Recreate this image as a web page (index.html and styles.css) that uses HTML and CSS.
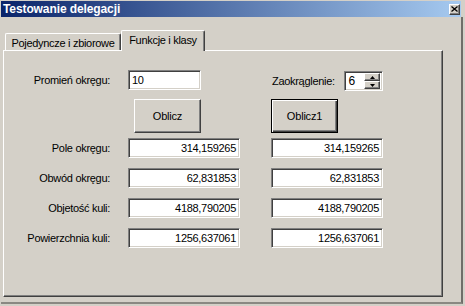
FILE: index.html
```html
<!DOCTYPE html>
<html lang="pl">
<head>
    <meta charset="UTF-8">
    <title>Testowanie delegacji</title>
    <link rel="stylesheet" href="styles.css">
</head>
<body>
    <div class="window">
        <div class="titlebar">
            <span class="title">Testowanie delegacji</span>
            <span class="close">
                <svg width="7" height="6" viewBox="0 0 7 6"><path d="M0.5 0.5 L6.5 5.5 M6.5 0.5 L0.5 5.5" stroke="#000" stroke-width="1.3"/></svg>
            </span>
        </div>
        <div class="client">
            <div class="tabs">
                <div class="tab">Pojedyncze i zbiorowe</div>
                <div class="tab active">Funkcje i klasy</div>
            </div>
            <div class="panel">
                <div class="row row-top">
                    <div class="lbl">Promień okręgu:</div>
                    <div class="cell"><div class="field field-short">10</div></div>
                    <div class="cell round">
                        <span class="round-lbl">Zaokrąglenie:</span>
                        <div class="spin">
                            <span class="spin-val">6</span>
                            <div class="spin-btns">
                                <div class="spin-btn"><svg width="5" height="3" viewBox="0 0 5 3"><path d="M2.5 0 L5 3 L0 3 Z" fill="#000"/></svg></div>
                                <div class="spin-btn"><svg width="5" height="3" viewBox="0 0 5 3"><path d="M0 0 L5 0 L2.5 3 Z" fill="#000"/></svg></div>
                            </div>
                        </div>
                    </div>
                </div>
                <div class="row row-btns">
                    <div class="lbl"></div>
                    <div class="cell"><button class="btn btn-left">Oblicz</button></div>
                    <div class="cell"><button class="btn btn-default">Oblicz1</button></div>
                </div>
                <div class="row row-out first">
                    <div class="lbl">Pole okręgu:</div>
                    <div class="cell"><div class="field field-out">314,159265</div></div>
                    <div class="cell"><div class="field field-out">314,159265</div></div>
                </div>
                <div class="row row-out">
                    <div class="lbl">Obwód okręgu:</div>
                    <div class="cell"><div class="field field-out">62,831853</div></div>
                    <div class="cell"><div class="field field-out">62,831853</div></div>
                </div>
                <div class="row row-out">
                    <div class="lbl">Objetość kuli:</div>
                    <div class="cell"><div class="field field-out">4188,790205</div></div>
                    <div class="cell"><div class="field field-out">4188,790205</div></div>
                </div>
                <div class="row row-out">
                    <div class="lbl">Powierzchnia kuli:</div>
                    <div class="cell"><div class="field field-out">1256,637061</div></div>
                    <div class="cell"><div class="field field-out">1256,637061</div></div>
                </div>
            </div>
        </div>
    </div>
</body>
</html>
```

FILE: styles.css
```css
body {
    margin: 0;
    padding: 0;
    background-color: #d4d0c8;
    font-family: "Liberation Sans", Arial, sans-serif;
    font-size: 11px;
    letter-spacing: -0.3px;
    color: #000;
}

.window {
    width: 465px;
    height: 306px;
    box-sizing: border-box;
    padding: 1px 2px 2px 1px;
    display: flex;
    flex-direction: column;
}

.titlebar {
    height: 16px;
    margin-right: 2px;
    flex-shrink: 0;
    display: flex;
    align-items: center;
    justify-content: space-between;
    padding: 0 1px 0 2px;
    background: linear-gradient(to right, #0a246a, #a6caf0);
}

.titlebar .title {
    color: white;
    font-weight: bold;
    font-size: 12px;
    letter-spacing: -0.1px;
}

.titlebar .close {
    width: 11px;
    height: 11px;
    box-sizing: border-box;
    display: flex;
    align-items: center;
    justify-content: center;
    background-color: #d4d0c8;
    border: 1px solid;
    border-color: #fff #404040 #404040 #fff;
    box-shadow: inset -1px -1px #808080;
}

.client {
    flex: 1;
    padding: 13px 0 0 2px;
    border-right: 2px solid #6f6d68;
    border-bottom: 2px solid #8a8882;
}

.tabs {
    display: flex;
    align-items: flex-end;
    height: 20px;
    padding-left: 2px;
}

.tab {
    height: 17px;
    width: 116px;
    box-sizing: border-box;
    border-top: 1px solid #fff;
    border-left: 1px solid #fff;
    border-right: 1px solid #404040;
    border-radius: 2px 2px 0 0;
    box-shadow: inset -1px 0 #808080;
    display: flex;
    align-items: center;
    justify-content: center;
    padding-top: 1px;
}

.tab.active {
    width: 84px;
    height: 21px;
    margin-bottom: -1px;
    background-color: #d4d0c8;
    position: relative;
    padding-top: 0;
    padding-bottom: 2px;
}

.panel {
    width: 440px;
    height: 247px;
    box-sizing: border-box;
    border-top: 1px solid #fff;
    border-left: 1px solid #fff;
    border-right: 1px solid #404040;
    border-bottom: 1px solid #404040;
    box-shadow: inset -1px -1px #808080;
    padding-top: 19px;
}

.row {
    display: grid;
    grid-template-columns: 124px 143px 112px;
    align-items: center;
}

.row .lbl {
    text-align: right;
    padding-right: 18px;
}

.row-top {
    align-items: start;
    height: 21px;
}

.row-top .lbl {
    line-height: 20px;
}

.row-btns {
    margin-top: 8px;
}

.row-out {
    margin-top: 10px;
}

.row-out.first {
    margin-top: 5px;
}

.field {
    height: 20px;
    box-sizing: border-box;
    border: 1px solid;
    border-color: #808080 #fff #fff #808080;
    box-shadow: inset 1px 1px #404040, inset -1px -1px #d4d0c8;
    background-color: #fff;
    line-height: 18px;
    padding: 0 3px;
}

.field-short {
    width: 73px;
}

.field-out {
    width: 112px;
    text-align: right;
}

.round {
    display: flex;
    align-items: center;
    padding-left: 1px;
}

.round-lbl {
    width: 78px;
}

.spin {
    margin-top: 1px;
    width: 41px;
    height: 20px;
    box-sizing: border-box;
    display: flex;
    align-items: center;
    justify-content: space-between;
    border: 1px solid;
    border-color: #808080 #fff #fff #808080;
    box-shadow: inset 1px 1px #404040, inset -1px -1px #d4d0c8;
    background-color: #fff;
    padding: 2px 2px 2px 3px;
}

.spin-val {
    font-size: 12px;
}

.spin-btns {
    display: flex;
    flex-direction: column;
    height: 16px;
}

.spin-btn {
    width: 16px;
    height: 8px;
    box-sizing: border-box;
    display: flex;
    align-items: center;
    justify-content: center;
    background-color: #d4d0c8;
    border: 1px solid;
    border-color: #fff #404040 #404040 #fff;
    box-shadow: inset -1px -1px #808080;
}

.btn {
    font-family: inherit;
    font-size: 11px;
    letter-spacing: -0.2px;
    color: #000;
    height: 34px;
    width: 67px;
    padding: 0;
    background-color: #d4d0c8;
    border: 1px solid;
    border-color: #fff #404040 #404040 #fff;
    box-shadow: inset -1px -1px #808080;
    border-radius: 0;
}

.btn-left {
    margin-left: 6px;
}

.btn-default {
    border: 1px solid #000;
    box-shadow: inset 1px 1px #fff, inset -1px -1px #404040, inset -2px -2px #808080;
}
```
